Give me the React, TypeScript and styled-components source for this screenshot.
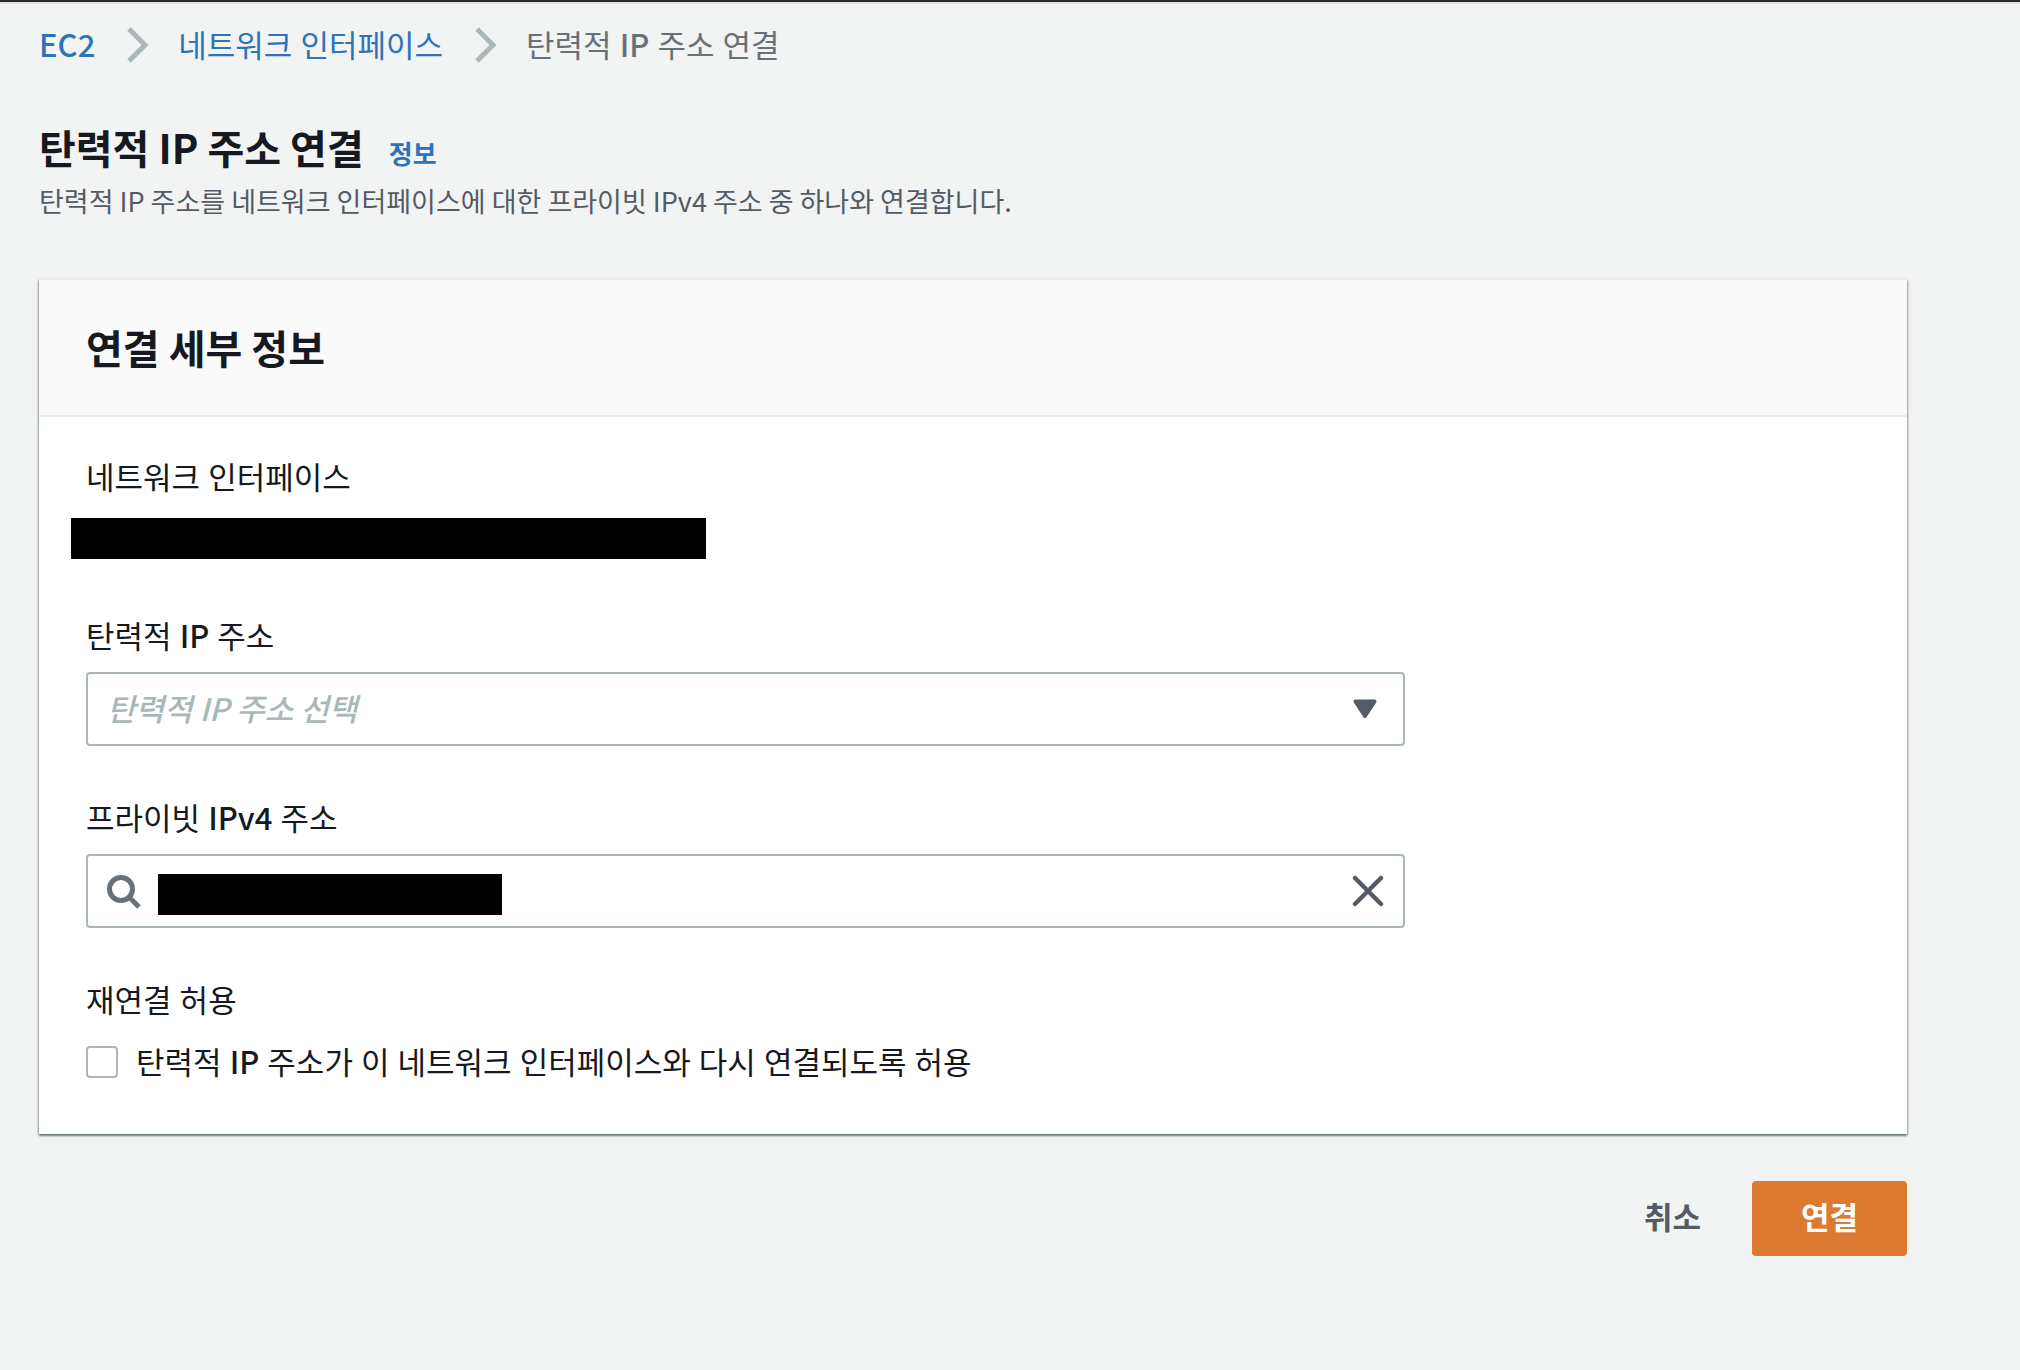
import React, { useState } from 'react';
import styled, { createGlobalStyle, css } from 'styled-components';

const color = {
  page: '#f2f3f3',
  text: '#16191f',
  muted: '#545b64',
  subtle: '#687078',
  link: '#2e73b8',
  line: '#aab7b8',
  divider: '#eaeded',
  primary: '#dc7a32',
};

const koreanFont = '"Noto Sans CJK KR", "Open Sans", sans-serif';

const GlobalStyle = createGlobalStyle`
  *, *::before, *::after { box-sizing: border-box; }
  body {
    margin: 0;
    background: ${color.page};
    color: ${color.text};
    font-family: "Open Sans", "Noto Sans CJK KR", sans-serif;
    font-size: 31px;
    line-height: 44px;
  }
  button, input, select { font: inherit; color: inherit; }
`;

const Page = styled.div`
  border-top: 2px solid #2c2c2c;
  box-shadow: inset 0 2px 0 #dfe0e0;
  padding: 21px 113px 64px 39px;
`;

/* Latin abbreviations sit a weight above the Hangul around them. */
const Latin = styled.span`
  font-family: ${koreanFont};
  font-weight: 500;
  line-height: 1;
`;

const Crumbs = styled.ol`
  display: flex;
  align-items: center;
  gap: 29px;
  margin: 0;
  padding: 0;
  list-style: none;
`;

const Crumb = styled.li`
  display: flex;
  align-items: center;
  gap: 32px;
  color: ${color.subtle};
`;

const TextLink = styled.a`
  color: ${color.link};
  text-decoration: none;
`;

const InfoLink = styled(TextLink)`
  font-size: 26px;
  font-weight: 700;
`;

const PageHeader = styled.header`
  margin: 52px 0 56px;
`;

const TitleRow = styled.div`
  display: flex;
  align-items: baseline;
  gap: 25px;
`;

const heading = css`
  margin: 0;
  font-family: ${koreanFont};
  font-size: 40px;
  line-height: 56px;
  font-weight: 700;
`;

const PageTitle = styled.h1`${heading}`;
const CardTitle = styled.h2`${heading}`;

const Description = styled.p`
  margin: 3px 0 0;
  color: ${color.muted};
  font-family: ${koreanFont};
  font-size: 27px;
`;

const Card = styled.section`
  background: #fff;
  border-top: 1px solid ${color.divider};
  box-shadow: 0 2px 2px 0 rgba(0, 28, 36, 0.4), 1px 1px 2px 0 rgba(0, 28, 36, 0.25),
    -1px 1px 2px 0 rgba(0, 28, 36, 0.25);
`;

const CardHeader = styled.div`
  padding: 39px 47px 40px;
  background: #fafafa;
  border-bottom: 2px solid ${color.divider};
`;

const CardBody = styled.div`
  display: flex;
  flex-direction: column;
  gap: 50px;
  padding: 38px 47px 47px;
`;

const Field = styled.div`
  display: flex;
  flex-direction: column;
  gap: 14px;
  max-width: 1319px;
`;

const Label = styled.label``;

const Row = styled.div`
  display: flex;
  align-items: center;
  gap: 18px;
  height: 51px;
`;

const Redacted = styled.span<{ $width: number }>`
  flex: none;
  width: ${(p) => p.$width}px;
  height: 41px;
  background: #000;
`;

const InterfaceValue = styled(Redacted)`
  margin-left: -15px;
`;

const boxed = css`
  height: 74px;
  border: 2px solid ${color.line};
  border-radius: 4px;
  background: #fff;
`;

const SelectWrap = styled.div`
  position: relative;
  display: flex;
`;

const Select = styled.select`
  ${boxed}
  appearance: none;
  width: 100%;
  padding: 0 80px 2px 19px;
  color: ${color.line};
  font-family: ${koreanFont};
  font-weight: 500;
  font-style: italic;
`;

const Caret = styled.svg`
  position: absolute;
  right: 28px;
  top: 27px;
  pointer-events: none;
`;

const SearchBox = styled.div`
  ${boxed}
  display: flex;
  align-items: center;
  padding: 0 18px;
`;

const SearchValue = styled(Redacted)`
  margin: 6px 0 0 16px;
`;

const SearchInput = styled.input`
  flex: 1;
  min-width: 0;
  border: 0;
  outline: 0;
  background: transparent;
`;

const IconButton = styled.button`
  display: flex;
  padding: 0;
  border: 0;
  background: none;
  cursor: pointer;
`;

const Checkbox = styled.input`
  appearance: none;
  width: 32px;
  height: 32px;
  margin: 0;
  border: 2px solid ${color.line};
  border-radius: 4px;
  background: #fff;
  &:checked { background: ${color.link}; }
`;

const Actions = styled.div`
  display: flex;
  justify-content: flex-end;
  gap: 10px;
  margin-top: 47px;
`;

const Button = styled.button<{ $primary?: boolean }>`
  height: 75px;
  padding: 0 ${(p) => (p.$primary ? 49 : 41)}px 4px;
  border: 0;
  border-radius: 4px;
  background: ${(p) => (p.$primary ? color.primary : 'transparent')};
  color: ${(p) => (p.$primary ? '#fff' : color.muted)};
  font-weight: 700;
  cursor: pointer;
`;

const Chevron = () => (
  <svg width="22" height="36" viewBox="0 0 22 36" fill="none" stroke={color.line} strokeWidth="5" aria-hidden="true">
    <path d="M2 2 L18 18 L2 34" />
  </svg>
);

const SearchIcon = () => (
  <svg width="36" height="36" viewBox="0 0 36 36" fill="none" stroke={color.subtle} strokeWidth="5" aria-hidden="true">
    <circle cx="15" cy="16" r="11.5" />
    <path d="M23 24 L33 34" />
  </svg>
);

const CloseIcon = () => (
  <svg width="34" height="34" viewBox="0 0 34 34" fill="none" stroke={color.muted} strokeWidth="4.5" strokeLinecap="round" aria-hidden="true">
    <path d="M4 4 L30 30 M30 4 L4 30" />
  </svg>
);

export default function App() {
  const [allowed, setAllowed] = useState(false);
  return (
    <>
      <GlobalStyle />
      <Page>
        <nav aria-label="breadcrumb">
          <Crumbs>
            <Crumb><TextLink href="#ec2"><Latin>EC2</Latin></TextLink><Chevron /></Crumb>
            <Crumb><TextLink href="#interfaces">네트워크 인터페이스</TextLink><Chevron /></Crumb>
            <Crumb aria-current="page"><span>탄력적 <Latin>IP</Latin> 주소 연결</span></Crumb>
          </Crumbs>
        </nav>
        <PageHeader>
          <TitleRow>
            <PageTitle>탄력적 IP 주소 연결</PageTitle>
            <InfoLink href="#info">정보</InfoLink>
          </TitleRow>
          <Description>
            탄력적 IP 주소를 네트워크 인터페이스에 대한 프라이빗 IPv4 주소 중 하나와 연결합니다.
          </Description>
        </PageHeader>
        <Card>
          <CardHeader><CardTitle>연결 세부 정보</CardTitle></CardHeader>
          <CardBody>
            <Field>
              <span>네트워크 인터페이스</span>
              <Row><InterfaceValue $width={635} /></Row>
            </Field>
            <Field>
              <Label htmlFor="elastic-ip">탄력적 <Latin>IP</Latin> 주소</Label>
              <SelectWrap>
                <Select id="elastic-ip" defaultValue="">
                  <option value="">탄력적 IP 주소 선택</option>
                </Select>
                <Caret width="24" height="20" viewBox="0 0 24 20" fill={color.muted} stroke={color.muted} strokeWidth="4" strokeLinejoin="round" aria-hidden="true">
                  <path d="M2.5 2.5 H21.5 L12 17 Z" />
                </Caret>
              </SelectWrap>
            </Field>
            <Field>
              <Label htmlFor="private-ip">프라이빗 <Latin>IPv4</Latin> 주소</Label>
              <SearchBox>
                <SearchIcon />
                <SearchValue $width={344} />
                <SearchInput id="private-ip" type="text" />
                <IconButton type="button" aria-label="지우기"><CloseIcon /></IconButton>
              </SearchBox>
            </Field>
            <Field>
              <span>재연결 허용</span>
              <Row>
                <Checkbox id="reassociate" type="checkbox" checked={allowed} onChange={(e) => setAllowed(e.target.checked)} />
                <Label htmlFor="reassociate">탄력적 <Latin>IP</Latin> 주소가 이 네트워크 인터페이스와 다시 연결되도록 허용</Label>
              </Row>
            </Field>
          </CardBody>
        </Card>
        <Actions>
          <Button type="button">취소</Button>
          <Button type="button" $primary>연결</Button>
        </Actions>
      </Page>
    </>
  );
}
